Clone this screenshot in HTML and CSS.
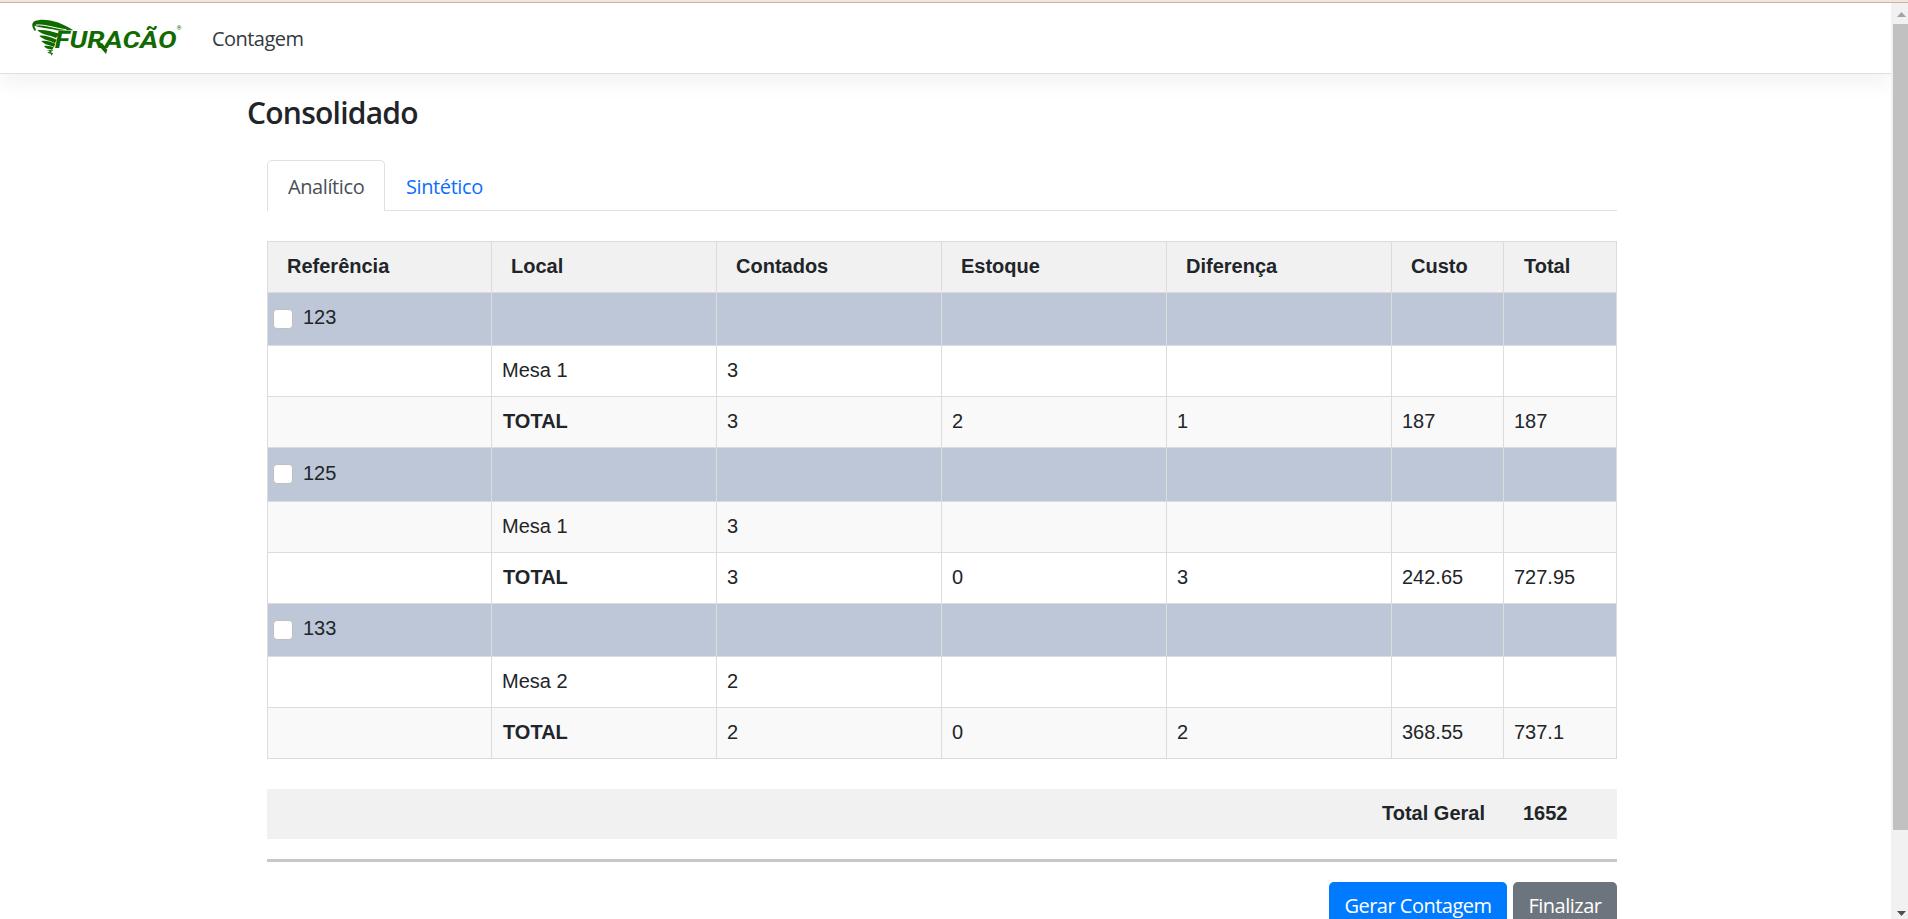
FILE: index.html
```html
<!DOCTYPE html>
<html lang="pt-BR">
<head>
<meta charset="utf-8">
<title>Contagem</title>
<link rel="stylesheet" href="styles.css">
</head>
<body>
<div class="edge"></div>
<div class="screen">
<div class="page">
  <header class="navbar">
    <svg class="logo" viewBox="0 0 510 165" role="img" aria-label="Furacão">
      <g fill="#116a00">
        <path d="M45 64C30 44 36 32 58 30C92 27 128 40 160 61L118 62C92 55 62 54 47 48C41 44 44 52 48 59Z"/>
        <path d="M52 61C70 58 92 63 118 71L108 84C88 75 66 75 52 61Z"/>
        <path d="M58 77C74 75 92 81 110 89L105 100C90 90 72 92 58 77Z"/>
        <path d="M64 93C80 91 91 95 106 101L102 111C89 105 74 105 64 93Z"/>
        <path d="M72 108C84 106 94 109 101 112L97 119C86 117 78 117 72 108Z"/>
        <path d="M80 120L100 121L91 127L99 129L95 137L92 131L82 128L90 124Z"/>
        <path d="M229 99L247 100L262 119L258 132Z"/>
      </g>
      <path d="M48 45C76 43 110 56 139 59" fill="none" stroke="#fff" stroke-width="3"/>
      <text class="logo-text" x="104" y="114" textLength="366" lengthAdjust="spacingAndGlyphs">FURACÃO</text>
      <text class="logo-mark" x="470" y="60">®</text>
    </svg>
    <a class="nav-item"><span class="ui">Contagem</span></a>
  </header>
  <main class="container">
    <h1 class="title">Consolidado</h1>
    <div class="content">
      <nav class="tabs">
        <a class="tab active">Analítico</a>
        <a class="tab">Sintético</a>
      </nav>
      <table class="grid">
        <colgroup><col class="c-first"><col class="c-wide"><col class="c-wide"><col class="c-wide"><col class="c-wide"><col class="c-cost"><col class="c-total"></colgroup>
        <thead>
          <tr><th>Referência</th><th>Local</th><th>Contados</th><th>Estoque</th><th>Diferença</th><th>Custo</th><th class="last">Total</th></tr>
        </thead>
        <tbody>
          <tr class="group"><td><label class="check"><i class="box"></i>123</label></td><td></td><td></td><td></td><td></td><td></td><td></td></tr>
          <tr><td></td><td>Mesa 1</td><td>3</td><td></td><td></td><td></td><td></td></tr>
          <tr class="odd"><td></td><td class="sum">TOTAL</td><td>3</td><td>2</td><td>1</td><td>187</td><td>187</td></tr>
          <tr class="group tall"><td><label class="check"><i class="box"></i>125</label></td><td></td><td></td><td></td><td></td><td></td><td></td></tr>
          <tr class="odd"><td></td><td>Mesa 1</td><td>3</td><td></td><td></td><td></td><td></td></tr>
          <tr><td></td><td class="sum">TOTAL</td><td>3</td><td>0</td><td>3</td><td>242.65</td><td>727.95</td></tr>
          <tr class="group"><td><label class="check"><i class="box"></i>133</label></td><td></td><td></td><td></td><td></td><td></td><td></td></tr>
          <tr><td></td><td>Mesa 2</td><td>2</td><td></td><td></td><td></td><td></td></tr>
          <tr class="odd"><td></td><td class="sum">TOTAL</td><td>2</td><td>0</td><td>2</td><td>368.55</td><td>737.1</td></tr>
        </tbody>
      </table>
      <div class="grand"><span class="grand-label">Total Geral</span><span class="grand-value">1652</span></div>
      <div class="rule"></div>
      <div class="actions">
        <button class="btn primary">Gerar Contagem</button>
        <button class="btn secondary">Finalizar</button>
      </div>
    </div>
  </main>
</div>
<div class="scrollbar">
  <svg class="arrow" viewBox="0 0 9 5"><path d="M0 5L4.5 0L9 5Z" fill="#a3a3a3"/></svg>
  <div class="thumb"></div>
  <svg class="arrow down" viewBox="0 0 9 5"><path d="M0 0L4.5 5L9 0Z" fill="#505050"/></svg>
</div>
</div>
</body>
</html>
```
FILE: styles.css
```css
* { box-sizing: border-box; }
body {
  margin: 0;
  height: 919px;
  overflow: hidden;
  background: #fff;
  color: #212529;
  font: 20px/30px "Open Sans", "Noto Sans", sans-serif;
}
.edge { height: 3px; background: #f8e3da; border-bottom: 1px solid #cbb5b2; }
.screen { display: flex; height: 916px; }
.page { flex: 1; overflow: hidden; }
.navbar {
  display: flex;
  height: 71px;
  padding-left: 20px;
  border-bottom: 1px solid #dfdfdf;
  box-shadow: 0 10px 20px rgba(0, 0, 0, .05);
}
.logo { width: 170px; height: 55px; margin-top: 7px; }
.logo-text { font: italic bold 72px Roboto, sans-serif; fill: #116a00; }
.logo-mark { font: 18px Roboto, sans-serif; fill: #116a00; }
.nav-item { margin: 21px 0 0 22px; letter-spacing: -.55px; color: #333a40; }
.container { width: 1400px; padding-left: 247px; box-sizing: content-box; }
.title { margin: 19px 0 0; font: 600 30px/40px "Open Sans", "Noto Sans", sans-serif; letter-spacing: -.75px; }
.content { width: 1350px; margin-left: 20px; }
.tabs { display: flex; height: 51px; margin-top: 27px; border-bottom: 1px solid #dee2e6; }
.tab {
  height: 51px;
  padding: 11px 20px 0;
  border: 1px solid transparent;
  border-bottom: 0;
  color: #0d6efd;
  letter-spacing: -.4px;
}
.tab.active { width: 118px; background: #fff; border-color: #dee2e6; border-radius: 5px 5px 0 0; color: #495057; }
.grid {
  width: 1350px;
  margin-top: 30px;
  table-layout: fixed;
  border-collapse: separate;
  border-spacing: 0;
  border: solid #dcdcdc;
  border-width: 1px 0 0 1px;
  font: 20px/30px "Liberation Sans", Arial, sans-serif;
}
.c-first { width: 224px; }
.c-wide { width: 225px; }
.c-cost { width: 112px; }
.c-total { width: 113px; }
.grid tr { height: 51px; }
.grid .group { height: 53px; background: #bec7d7; }
.grid .tall { height: 54px; }
.grid .odd { background: #f9f9f9; }
.grid th, .grid td {
  padding: 0 10px 2px;
  border: solid #dcdcdc;
  border-width: 0 1px 1px 0;
  text-align: left;
  vertical-align: middle;
}
.grid th { padding: 0 19px 2px; background: #f1f1f1; }
.grid th.last { padding-left: 20px; }
.grid .sum { padding-left: 11px; font-weight: bold; }
.grid .group td { padding: 0 5px 2px; }
.check { display: flex; align-items: center; gap: 10px; margin-top: -2px; }
.box { width: 20px; height: 20px; margin-top: 3px; background: #fff; border: 1px solid #c0c0c0; border-radius: 4px; }
.grand {
  display: flex;
  justify-content: flex-end;
  height: 50px;
  margin-top: 30px;
  padding-top: 9px;
  background: #f1f1f1;
  font: bold 20px/30px "Liberation Sans", Arial, sans-serif;
}
.grand-value { width: 94px; margin-left: 38px; }
.rule { height: 3px; margin-top: 20px; background: #c8c8c8; }
.actions { display: flex; justify-content: flex-end; gap: 6px; margin-top: 20px; }
.btn {
  width: 178px;
  height: 48px;
  padding: 0;
  border: 0;
  border-radius: 5px;
  background: #007bff;
  color: #fff;
  font: 20px/30px "Open Sans", "Noto Sans", sans-serif;
  letter-spacing: -.5px;
}
.btn.secondary { width: 104px; background: #6c757d; }
.scrollbar { display: flex; flex-direction: column; width: 17px; padding-left: 2px; background: #f1f1f1; }
.arrow { width: 9px; height: 5px; margin: 9px 0 7px 4px; }
.thumb { height: 806px; background: #c1c1c1; }
.arrow.down { margin: 81px 0 0 4px; }
```
